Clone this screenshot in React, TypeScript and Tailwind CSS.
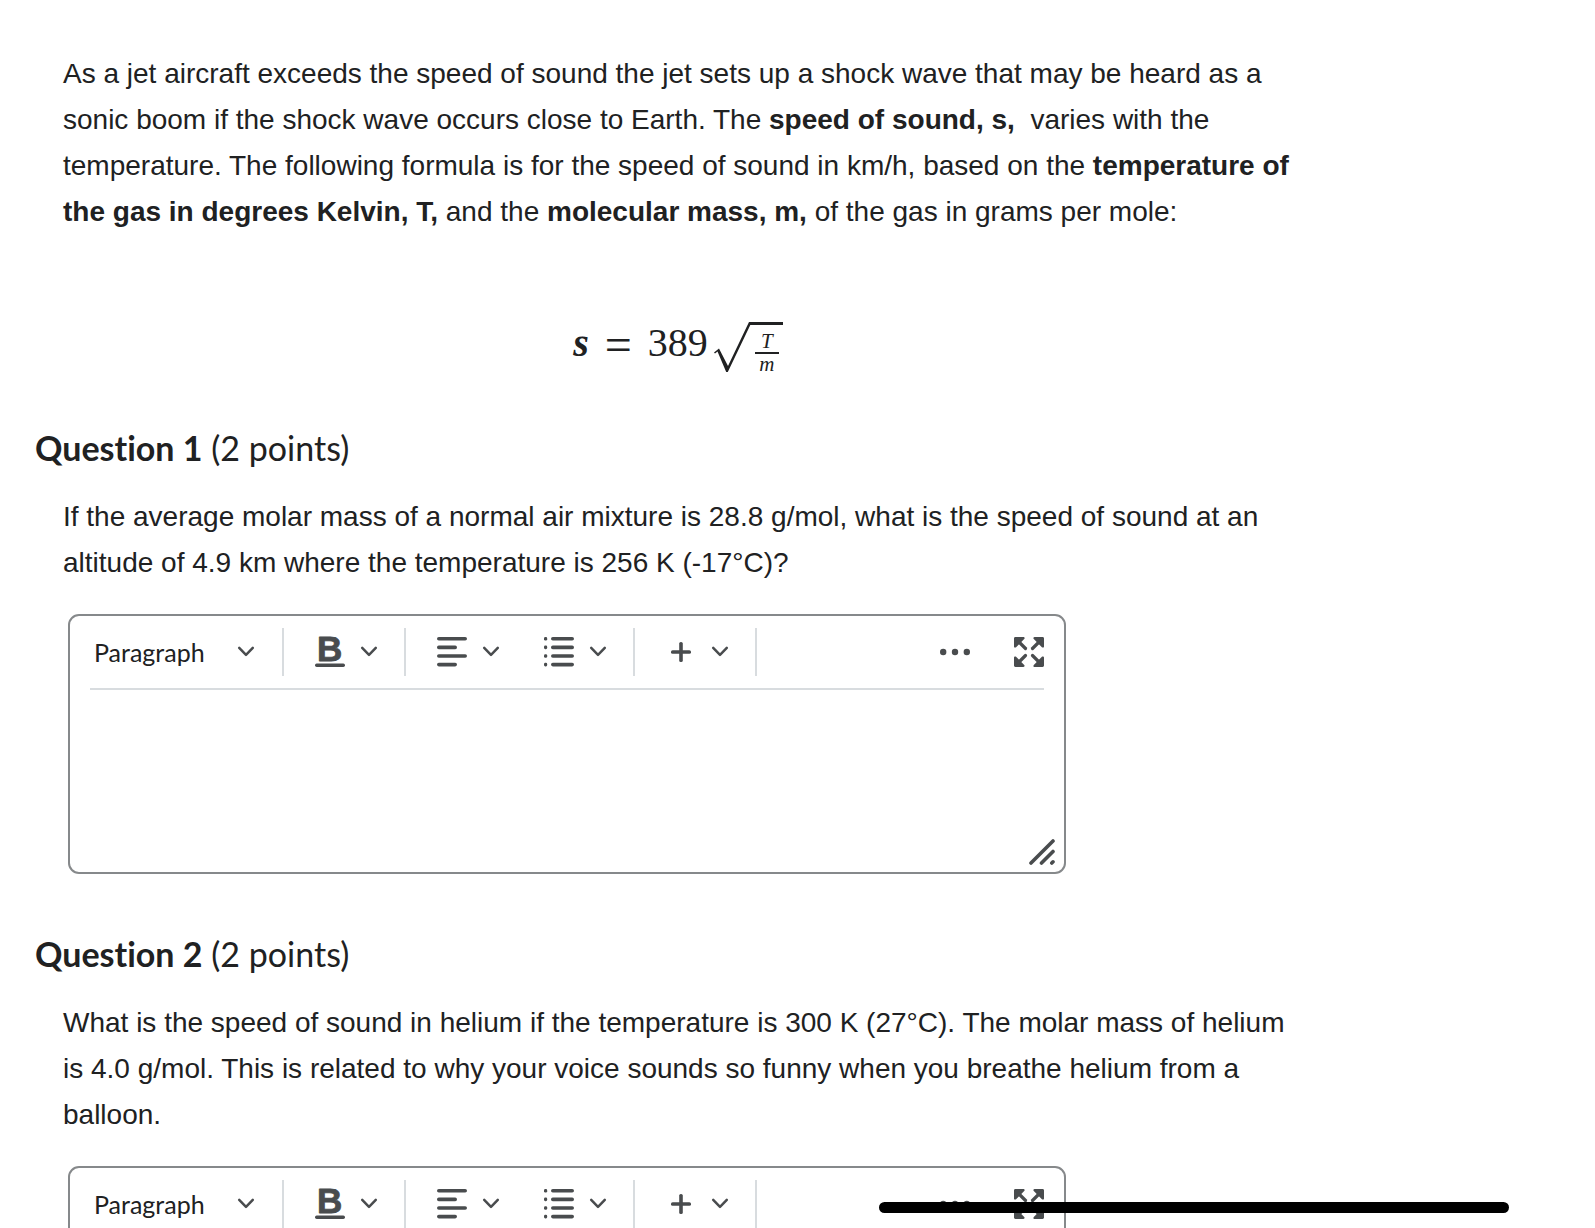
import React, { useState } from 'react';

interface ToolButtonProps {
  label: string;
  children: React.ReactNode;
}

interface QuestionProps {
  number: number;
  points: number;
  children: React.ReactNode;
}

const Chevron = () => (
  <svg className="h-[18px] w-[18px] shrink-0" viewBox="0 0 18 18" fill="none" aria-hidden="true">
    <path d="M2.200 4.800l6.800 7 6.800-7" stroke="#494c4e" strokeWidth="2.500" strokeLinecap="round" strokeLinejoin="round" />
  </svg>
);

const BoldIcon = () => (
  <svg className="h-[30px] w-[30px] overflow-visible" viewBox="0 0 30 30" aria-hidden="true">
    <text
      x="2"
      y="24"
      fontFamily="Liberation Sans, Arial, sans-serif"
      fontSize="35"
      fontWeight="700"
      fill="#494c4e"
      stroke="#494c4e"
      strokeWidth="0.800"
      strokeLinejoin="round"
    >
      B
    </text>
    <rect x="0" y="26.600" width="30" height="3.400" rx="1.700" fill="#494c4e" />
  </svg>
);

const AlignIcon = () => (
  <svg className="h-[30px] w-[30px]" viewBox="0 0 30 30" fill="#494c4e" aria-hidden="true">
    <rect x="0" y="0" width="30" height="3.600" rx="1.800" />
    <rect x="0" y="8.600" width="20" height="3.600" rx="1.800" />
    <rect x="0" y="17.200" width="30" height="3.600" rx="1.800" />
    <rect x="0" y="25.800" width="20" height="3.600" rx="1.800" />
  </svg>
);

const ListIcon = () => (
  <svg className="h-[30px] w-[30px]" viewBox="0 0 30 30" fill="#494c4e" aria-hidden="true">
    {[0, 8.6, 17.2, 25.8].map((y) => (
      <g key={y}>
        <rect x="0" y={y} width="3.200" height="3.600" rx="1.400" />
        <rect x="7" y={y} width="23" height="3.600" rx="1.800" />
      </g>
    ))}
  </svg>
);

const PlusIcon = () => (
  <svg className="h-[30px] w-[30px]" viewBox="0 0 30 30" fill="#494c4e" aria-hidden="true">
    <rect x="5" y="13.200" width="20" height="3.600" rx="1.600" />
    <rect x="13.200" y="5" width="3.600" height="20" rx="1.600" />
  </svg>
);

const MoreIcon = () => (
  <svg className="h-[30px] w-[30px]" viewBox="0 0 30 30" fill="#494c4e" aria-hidden="true">
    <circle cx="3.200" cy="15" r="3.200" />
    <circle cx="15" cy="15" r="3.200" />
    <circle cx="26.800" cy="15" r="3.200" />
  </svg>
);

const FullscreenIcon = () => (
  <svg className="h-[30px] w-[30px]" viewBox="0 0 30 30" aria-hidden="true">
    {[0, 90, 180, 270].map((angle) => (
      <g key={angle} transform={`rotate(${angle} 15 15)`}>
        <path
          d="M1.400 0H9.400c1.200 0 1.600 1.300.8 2.100L2.100 10.200C1.300 11 0 10.600 0 9.400V1.400C0 .6.600 0 1.400 0z"
          fill="#494c4e"
        />
        <path d="M4.500 4.500l7 7" stroke="#494c4e" strokeWidth="3.200" strokeLinecap="round" />
      </g>
    ))}
  </svg>
);

const ResizeIcon = () => (
  <svg className="h-[26px] w-[26px]" viewBox="0 0 26 26" stroke="#494c4e" strokeWidth="3.600" strokeLinecap="round" aria-hidden="true">
    <path d="M2 24L24 2M12.500 24L24 12.500M22.800 24l1.200-1.200" />
  </svg>
);

const ToolButton: React.FC<ToolButtonProps> = ({ label, children }) => (
  <button type="button" aria-label={label} className="flex h-12 items-center gap-[15px] px-[22px]">
    {children}
    <Chevron />
  </button>
);

const ToolGroup = ({ children }: { children: React.ReactNode }) => (
  <div className="flex h-12 items-center border-r-2 border-[#d8dcdf] pl-[9px] pr-1">{children}</div>
);

const Editor = ({ label }: { label: string }) => {
  const [value, setValue] = useState('');

  return (
    <div className="relative ml-[5px] max-w-[998px] rounded-[11px] border-2 border-[#86898b] px-5">
      <div className="flex items-center border-b-2 border-[#d8dcdf] py-3">
        <div className="relative flex h-12 w-[194px] items-center border-r-2 border-[#d8dcdf]">
          <select
            aria-label="Format"
            className="h-full w-full appearance-none bg-transparent pl-1 font-['Lato',sans-serif] text-[25px] text-[#202122]"
          >
            <option>Paragraph</option>
          </select>
          <span className="pointer-events-none absolute right-[27px]">
            <Chevron />
          </span>
        </div>
        <ToolGroup>
          <ToolButton label="Bold"><BoldIcon /></ToolButton>
        </ToolGroup>
        <ToolGroup>
          <ToolButton label="Alignment"><AlignIcon /></ToolButton>
          <ToolButton label="List"><ListIcon /></ToolButton>
        </ToolGroup>
        <ToolGroup>
          <ToolButton label="Insert"><PlusIcon /></ToolButton>
        </ToolGroup>
        <div className="ml-auto flex items-center gap-11">
          <button type="button" aria-label="More actions"><MoreIcon /></button>
          <button type="button" aria-label="Fullscreen"><FullscreenIcon /></button>
        </div>
      </div>
      <textarea
        aria-label={label}
        value={value}
        onChange={(e) => setValue(e.target.value)}
        className="block h-[182px] w-full resize-none py-3 outline-none"
      />
      <span className="absolute bottom-[7px] right-[9px]">
        <ResizeIcon />
      </span>
    </div>
  );
};

const Formula = () => (
  <div
    role="math"
    aria-label="s = 389 times the square root of T over m"
    className="flex h-[50px] items-center justify-center pr-1 font-['Liberation_Serif',serif] text-[40px] leading-none"
  >
    <span className="pb-2 font-bold italic">s</span>
    <span className="mx-4 pb-1 text-[48px]">=</span>
    <span className="pb-2">389</span>
    <svg className="ml-[6px] h-[50px] w-[37px]" viewBox="0 0 37 50" fill="currentColor" aria-hidden="true">
      <path d="M0 30.500L5 26.500 14 44 35 0h2v3h-.7L13.800 50h-1.600L3.500 29.500 1 31.600z" />
    </svg>
    <span className="flex h-[50px] w-8 flex-col items-center border-t-[3px] border-current pt-[6px] text-[21px] italic">
      <span>T</span>
      <span className="w-6 border-t-2 border-current text-center">m</span>
    </span>
  </div>
);

const Question: React.FC<QuestionProps> = ({ number, points, children }) => (
  <section>
    <h2 className="font-['Lato',sans-serif] text-[34px] leading-[46px] [font-variant-ligatures:none]">
      <span className="font-bold">Question {number}</span> ({points} points)
    </h2>
    <div className="mt-[23px] pl-7">
      <p className="mb-7">{children}</p>
      <Editor label={`Answer to question ${number}`} />
    </div>
  </section>
);

const App = () => (
  <main className="min-h-screen bg-white px-[35px] pt-[51px] font-['Liberation_Sans',Arial,sans-serif] text-[28px] leading-[46px] text-[#202122]">
    <div className="max-w-[1262px]">
      <div className="pl-7">
        <p>
          As a jet aircraft exceeds the speed of sound the jet sets up a shock wave that may be heard as a
          sonic boom if the shock wave occurs close to Earth. The <strong>speed of sound, s,</strong>
          &nbsp; varies with the temperature. The following formula is for the speed of sound in km/h, based
          on the <strong>temperature of the gas in degrees Kelvin, T,</strong> and the{' '}
          <strong>molecular mass, m,</strong> of the gas in grams per mole:
        </p>
        <div className="mb-[53px] mt-[87px]">
          <Formula />
        </div>
      </div>

      <div className="flex flex-col gap-[57px]">
        <Question number={1} points={2}>
          If the average molar mass of a normal air mixture is 28.8 g/mol, what is the speed of sound at an
          altitude of 4.9 km where the temperature is 256 K (-17°C)?
        </Question>
        <Question number={2} points={2}>
          What is the speed of sound in helium if the temperature is 300 K (27°C). The molar mass of helium
          is 4.0 g/mol. This is related to why your voice sounds so funny when you breathe helium from a
          balloon.
        </Question>
      </div>
    </div>

    <div className="fixed bottom-[15px] right-[86px] h-[11px] w-[630px] rounded-full bg-black" />
  </main>
);

export default App;
